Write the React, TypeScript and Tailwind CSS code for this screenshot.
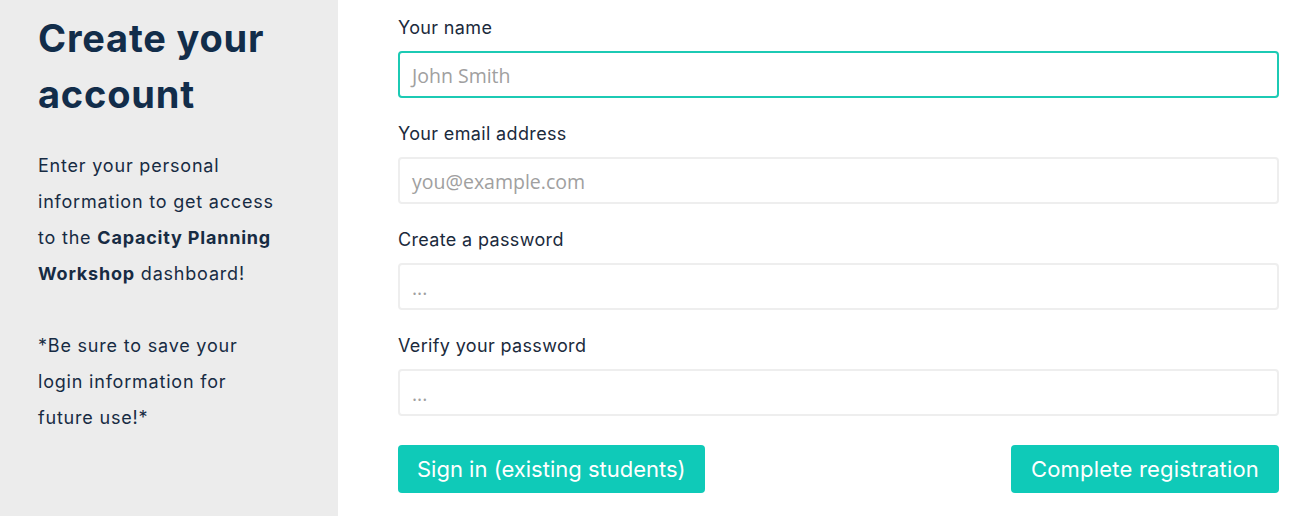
export default function App() {
  const font = { fontFamily: 'Inter, "Noto Sans", sans-serif' }
  return (
    <div className="flex w-[1307px] h-[516px] bg-white overflow-hidden" style={font}>
      {/* Left intro panel */}
      <div className="w-[338px] shrink-0 bg-[#ececec] pl-[38px] pr-6 pt-[10px] text-[#172b43]">
        <h1 className="text-[38px] leading-[56px] font-bold tracking-[0.8px] text-[#122d4a]">
          Create your account
        </h1>
        <p className="mt-[26px] text-[18px] leading-[36px] tracking-[0.8px] w-[245px]">
          Enter your personal information to get access to the{' '}
          <span className="font-bold">Capacity Planning Workshop</span> dashboard!
        </p>
        <p className="mt-[36px] text-[18px] leading-[36px] tracking-[0.8px] w-[225px]">
          *Be sure to save your login information for future use!*
        </p>
      </div>

      {/* Registration form */}
      <div className="flex-1 flex flex-col pl-[60px] pr-[28px] pt-[15px]">
        <Field label="Your name" placeholder="John Smith" focused />
        <Field label="Your email address" placeholder="you@example.com" />
        <Field label="Create a password" placeholder="..." />
        <Field label="Verify your password" placeholder="..." />
        <div className="flex justify-between mt-[6px]">
          <button className="h-[48px] px-[19px] rounded-[4px] bg-[#0fcab8] text-white text-[22px]">
            Sign in (existing students)
          </button>
          <button className="h-[48px] px-[20px] rounded-[4px] bg-[#0fcab8] text-white text-[22px] tracking-[0.2px]">
            Complete registration
          </button>
        </div>
      </div>
    </div>
  )
}

function Field({ label, placeholder, focused }: { label: string; placeholder: string; focused?: boolean }) {
  return (
    <div className="mb-[23px]">
      <div className="text-[18px] leading-[26px] tracking-[0.35px] text-[#1b2a3c]">{label}</div>
      <div
        className={
          focused
            ? 'mt-[10px] h-[47px] rounded-[4px] border-2 border-[#1ccab4] flex items-center px-[12px] pt-[3px]'
            : 'mt-[10px] h-[47px] rounded-[4px] border-2 border-[#eeeeee] flex items-center px-[12px] pt-[3px]'
        }
      >
        <span className="text-[19.5px] text-[#a0a0a0]" style={{ fontFamily: '"Open Sans", "Noto Sans", sans-serif' }}>
          {placeholder}
        </span>
      </div>
    </div>
  )
}
